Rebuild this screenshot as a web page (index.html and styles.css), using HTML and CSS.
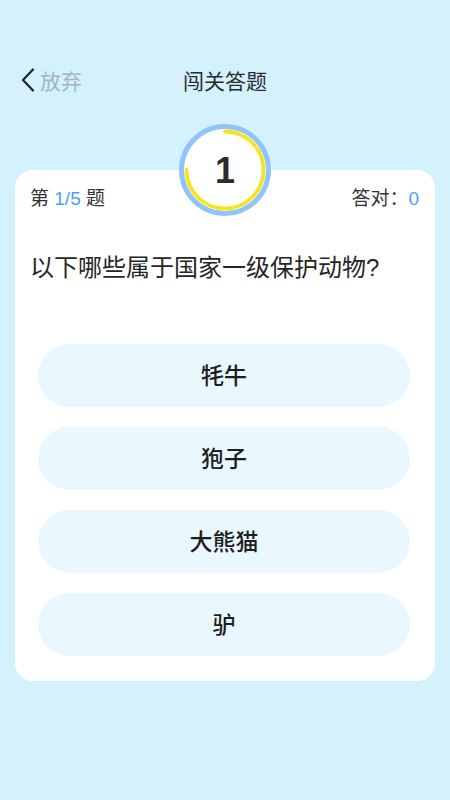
FILE: index.html
```html
<!DOCTYPE html>
<html lang="zh-CN">
<head>
<meta charset="utf-8">
<link rel="stylesheet" href="styles.css">
</head>
<body>
<div class="page">
  <header class="topbar">
    <div class="back">
      <svg class="chev" width="14" height="24" viewBox="0 0 14 24"><path d="M12 1.5 L2 12 L12 22.5" fill="none" stroke="#222" stroke-width="2.2" stroke-linecap="round" stroke-linejoin="round"/></svg>
      <span class="back-text">放弃</span>
    </div>
    <div class="title">闯关答题</div>
  </header>
  <main class="card">
    <div class="badge">
      <svg width="92" height="92" viewBox="0 0 92 92">
        <circle cx="46" cy="46" r="43.5" fill="#fff" stroke="#91c4fb" stroke-width="5"/>
        <circle cx="46" cy="46" r="38.5" fill="none" stroke="#f8e41e" stroke-width="3.8" stroke-linecap="round" stroke-dasharray="181.4 300" transform="rotate(-90 46 46)"/>
      </svg>
      <span class="badge-num">1</span>
    </div>
    <div class="stats">
      <div>第 <span class="blue">1/5</span> 题</div>
      <div>答对：<span class="blue">0</span></div>
    </div>
    <div class="question">以下哪些属于国家一级保护动物?</div>
    <div class="options">
      <div class="option">牦牛</div>
      <div class="option">狍子</div>
      <div class="option">大熊猫</div>
      <div class="option">驴</div>
    </div>
  </main>
</div>
</body>
</html>
```
FILE: styles.css
```css
* { box-sizing: border-box; }
html, body { margin: 0; padding: 0; }
body {
  background: #d4f1fe;
  font-family: "Liberation Sans", "Noto Sans CJK SC", sans-serif;
  color: #333;
}
.page { width: 450px; height: 800px; overflow: hidden; }
.topbar {
  position: relative;
  height: 40px;
  margin-top: 60px;
  display: flex;
  align-items: center;
  justify-content: center;
}
.back {
  position: absolute;
  left: 21px;
  top: 0;
  height: 40px;
  display: flex;
  align-items: center;
  gap: 5px;
}
.chev { display: block; }
.back-text { font-size: 21px; color: #a8b4b9; }
.title { font-size: 21px; color: #2b2b2b; }
.card {
  position: relative;
  margin: 70px 15px 0;
  background: #fff;
  border-radius: 18px;
  padding: 17px 16px 25px 15px;
}
.badge {
  position: absolute;
  top: -46px;
  left: 50%;
  margin-left: -46px;
  width: 92px;
  height: 92px;
}
.badge svg { display: block; }
.badge-num {
  position: absolute;
  inset: 0;
  display: flex;
  align-items: center;
  justify-content: center;
  font-size: 36px;
  font-weight: bold;
  color: #2b2b2b;
  padding-top: 1px;
}
.stats {
  display: flex;
  justify-content: space-between;
  font-size: 19px;
  line-height: 24px;
  color: #333;
}
.blue { color: #4a9ff5; }
.question {
  margin-top: 41px;
  font-size: 24px;
  line-height: 32px;
  color: #262626;
}
.options {
  margin-top: 60px;
  padding: 0 9px 0 8px;
  display: flex;
  flex-direction: column;
  gap: 20px;
}
.option {
  height: 63px;
  border-radius: 32px;
  background: #e9f7fe;
  display: flex;
  align-items: center;
  justify-content: center;
  font-size: 23px;
  font-weight: 500;
  color: #1e1e1e;
  padding-bottom: 3px;
}
```
